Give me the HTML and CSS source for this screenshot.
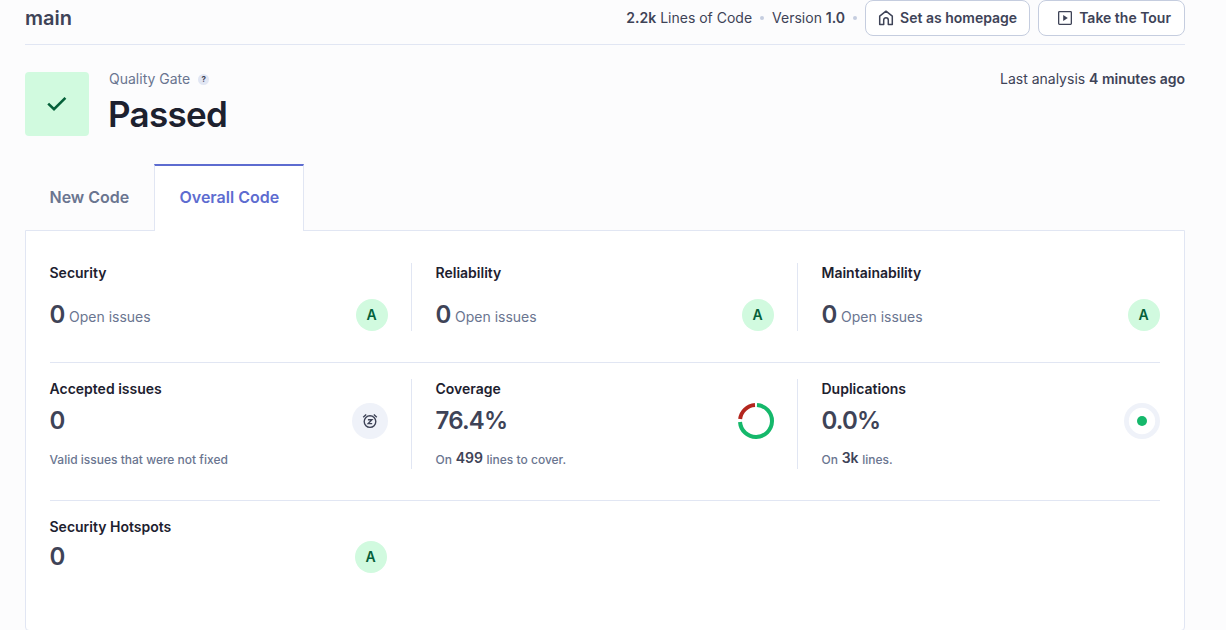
FILE: index.html
```html
<!DOCTYPE html>
<html lang="en">
<head>
  <meta charset="UTF-8">
  <title>Overview - main</title>
  <meta name="viewport" content="width=device-width, initial-scale=1.0">
  <link rel="stylesheet" href="styles.css">
</head>
<body>

  <div class="container">
    <header class="header">
      <h1>main</h1>
      <div class="meta">
        <span class="meta-item"><b>2.2k</b> Lines of Code</span>
        <span class="dot"></span>
        <span class="meta-item">Version <b>1.0</b></span>
        <span class="dot"></span>
        <button class="btn btn-home">
          <svg width="16" height="16" viewBox="0 0 16 16" fill="none" stroke="currentColor" stroke-width="1.5" stroke-linejoin="round"><path d="M1.7 6.2 8 1.2l6.3 5v8.2h-4V10a2.3 2.3 0 0 0-4.600 0v4.400h-4z"/></svg>
          Set as homepage
        </button>
        <button class="btn btn-tour">
          <svg width="16" height="16" viewBox="0 0 16 16" fill="none" stroke="currentColor" stroke-width="1.3"><rect x="1.65" y="1.65" width="12.7" height="12.7" rx="0.8"/><path d="M6.2 4.9v6.200L10.800 8z" fill="currentColor" stroke="none"/></svg>
          Take the Tour
        </button>
      </div>
    </header>

    <section class="gate">
      <div class="gate-icon">
        <svg width="20" height="16" viewBox="0 0 20 16" fill="none" stroke="currentColor" stroke-width="2.6"><path d="M1.2 7.6 7 13.2 18.4 1.8"/></svg>
      </div>
      <div class="gate-text">
        <div class="gate-label">Quality Gate <span class="help">?</span></div>
        <div class="gate-status">Passed</div>
      </div>
      <div class="analysis">Last analysis <b>4 minutes ago</b></div>
    </section>

    <nav class="tabs">
      <a class="tab">New Code</a>
      <a class="tab active">Overall Code</a>
    </nav>

    <main class="panel">
      <div class="row row-issues">
        <div class="card">
          <h2>Security</h2>
          <div class="value-line">
            <div class="count"><span class="value">0</span> <span class="unit">Open issues</span></div>
            <span class="rating">A</span>
          </div>
        </div>
        <div class="card">
          <h2>Reliability</h2>
          <div class="value-line">
            <div class="count"><span class="value">0</span> <span class="unit">Open issues</span></div>
            <span class="rating">A</span>
          </div>
        </div>
        <div class="card">
          <h2>Maintainability</h2>
          <div class="value-line">
            <div class="count"><span class="value">0</span> <span class="unit">Open issues</span></div>
            <span class="rating">A</span>
          </div>
        </div>
      </div>

      <div class="row row-measures">
        <div class="card">
          <h2>Accepted issues</h2>
          <div class="value-line">
            <span class="value">0</span>
            <span class="snooze">
              <svg width="16" height="16" viewBox="0 0 16 16" fill="none" stroke="currentColor" stroke-width="1.4"><circle cx="8" cy="8.6" r="5.8"/><path d="M1.2 4.2 4.2 1.5M14.8 4.2 11.8 1.5M5.9 6.7h4L6.2 10.6h4"/></svg>
            </span>
          </div>
          <p class="note">Valid issues that were not fixed</p>
        </div>
        <div class="card">
          <h2>Coverage</h2>
          <div class="value-line">
            <span class="value">76.4%</span>
            <svg width="36" height="36" viewBox="0 0 36 36" fill="none" stroke-width="4">
              <path d="M19 2.030A16 16 0 1 1 2.030 19" stroke="#15b86b"/>
              <path d="M2.130 16A16 16 0 0 1 17 2.030" stroke="#b3261e"/>
            </svg>
          </div>
          <p class="note">On <b>499</b> lines to cover.</p>
        </div>
        <div class="card">
          <h2>Duplications</h2>
          <div class="value-line">
            <span class="value">0.0%</span>
            <svg width="36" height="36" viewBox="0 0 36 36">
              <circle cx="18" cy="18" r="15.6" fill="none" stroke="#eff2f9" stroke-width="4.8"/>
              <circle cx="18" cy="18" r="5" fill="#15b86b"/>
            </svg>
          </div>
          <p class="note">On <b>3k</b> lines.</p>
        </div>
      </div>

      <div class="row row-hotspots">
        <div class="card">
          <h2>Security Hotspots</h2>
          <div class="value-line">
            <span class="value">0</span>
            <span class="rating">A</span>
          </div>
        </div>
      </div>
    </main>
  </div>

</body>
</html>
```
FILE: styles.css
```css
* {
  box-sizing: border-box;
}

body {
  margin: 0;
  height: 630px;
  overflow: hidden;
  background: #fcfcfd;
  color: #3e4357;
  font-family: Inter, "Liberation Sans", sans-serif;
  font-size: 14px;
  line-height: 20px;
}

b {
  font-weight: 600;
}

.container {
  width: 1160px;
  margin-left: 25px;
}

.header {
  display: flex;
  justify-content: space-between;
  height: 45px;
  border-bottom: 1px solid #e1e6f3;
}

h1 {
  margin: 4px 0 0;
  font-size: 20px;
  line-height: 28px;
  font-weight: 600;
}

.meta {
  display: flex;
  align-items: center;
  height: 36px;
}

.dot {
  width: 4px;
  height: 4px;
  margin: 0 8px;
  border-radius: 50%;
  background: #c5cddf;
}

.btn {
  display: flex;
  align-items: center;
  gap: 6px;
  height: 36px;
  padding: 0 12px;
  border: 1px solid #c5cddf;
  border-radius: 8px;
  background: #fff;
  color: #3e4357;
  font: 600 14px/20px Inter, "Liberation Sans", sans-serif;
}

.btn-tour {
  margin-left: 8px;
  padding-left: 18px;
  padding-right: 13px;
}

.gate {
  display: flex;
  height: 64px;
  margin-top: 27px;
}

.gate-icon {
  display: flex;
  align-items: center;
  justify-content: center;
  width: 64px;
  height: 64px;
  padding-right: 1px;
  border-radius: 4px;
  background: #d1fadf;
  color: #05603a;
}

.gate-text {
  flex: 1;
  margin: -3px 0 0 20px;
}

.gate-label {
  display: flex;
  align-items: center;
  color: #6a7590;
}

.help {
  width: 11px;
  height: 11px;
  margin-left: 8px;
  border-radius: 50%;
  background: #e1e6f3;
  color: #3e4357;
  font-size: 8px;
  line-height: 11px;
  font-weight: 700;
  text-align: center;
}

.gate-status {
  margin-left: -1px;
  color: #1d212f;
  font-size: 35px;
  line-height: 50px;
  font-weight: 600;
  letter-spacing: -0.7px;
}

.analysis {
  margin-top: -3px;
}

.tabs {
  display: flex;
  height: 67px;
  margin-top: 28px;
  position: relative;
  z-index: 1;
}

.tab {
  width: 129px;
  padding-left: 24.5px;
  color: #6a7590;
  font-size: 16px;
  line-height: 67px;
  font-weight: 600;
}

.tab.active {
  width: 150px;
  border: 1px solid #e1e6f3;
  border-top: 2px solid #5d6cd0;
  border-bottom: 0;
  background: #fff;
  color: #5d6cd0;
  line-height: 63px;
}

.panel {
  height: 401px;
  margin-top: -1px;
  padding: 0 24px;
  border: 1px solid #e1e6f3;
  border-radius: 0 0 4px 4px;
  background: #fff;
}

.row {
  display: grid;
  grid-template-columns: 362px 362px 338px;
  gap: 24px;
}

.row-issues {
  padding: 32px 0 31px;
}

.row-measures {
  padding: 16px 0 31px;
  border-top: 1px solid #e1e6f3;
  border-bottom: 1px solid #e1e6f3;
}

.row-hotspots {
  padding-top: 16px;
}

.card {
  padding-right: 23px;
  border-right: 1px solid #e1e6f3;
}

.card:last-child {
  padding-right: 0;
  border-right: 0;
}

.row-hotspots .card:last-child {
  padding-right: 25px;
}

h2 {
  margin: 0 0 0 -0.5px;
  color: #1d212f;
  font-size: 14px;
  line-height: 20px;
  font-weight: 600;
}

.value-line {
  display: flex;
  align-items: center;
  justify-content: space-between;
  height: 32px;
}

.row-issues .value-line {
  margin-top: 16px;
}

.row-measures .value-line {
  height: 36px;
  margin-top: 4px;
}

.row-hotspots .value-line {
  margin-top: 4px;
}

.value {
  margin-left: -0.5px;
  font-size: 24px;
  line-height: 32px;
  font-weight: 600;
  letter-spacing: -0.8px;
}

.unit {
  color: #6a7590;
  vertical-align: 1px;
}

.count .value {
  margin-right: 0.5px;
}

.rating {
  width: 32px;
  height: 32px;
  padding-right: 1px;
  border-radius: 50%;
  background: #d1fadf;
  color: #05603a;
  line-height: 32px;
  font-weight: 600;
  text-align: center;
}

.snooze {
  display: flex;
  align-items: center;
  justify-content: center;
  width: 36px;
  height: 36px;
  border-radius: 50%;
  background: #eff2f9;
}

.note {
  height: 20px;
  margin: 10px 0 0 -0.5px;
  color: #6a7590;
  font-size: 12px;
  line-height: 22px;
  font-weight: 500;
}

.note b {
  margin: 0 0.5px;
  color: #3e4357;
  font-size: 14px;
  line-height: 1;
  vertical-align: 1px;
}
```
